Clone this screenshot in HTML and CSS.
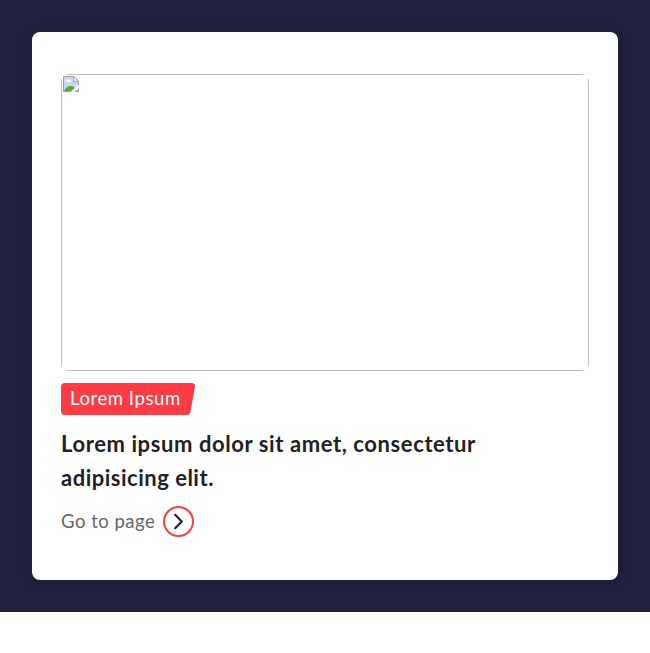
FILE: index.html
```
<!DOCTYPE html>
<html lang="en">
<head>
<meta charset="utf-8">
<title>Card</title>
<link rel="stylesheet" href="styles.css">
</head>
<body>
<section class="stage">
  <article class="card">
    <div class="media">
      <div class="frame">
        <svg class="broken" width="16" height="16" viewBox="0 0 16 16">
          <path d="M.5.5h10.2l4.8 4.8v10.2H.5z" fill="#c6d6f5"/>
          <path d="M2.500 6c0-1.300 1-1.700 1.800-1.500C4.700 2.800 6.900 2.800 7.300 4.500c1.100 0 1.500.7 1.500 1.500z" fill="#fff"/>
          <path d="M1 15c1.500-3.300 4-5 7-5 2.500 0 5 2 7 5z" fill="#58a83a"/>
          <path d="M.5.5h10.200l4.800 4.800v10.200H.5z" fill="none" stroke="#a0a0a0"/>
          <path d="M10.700.5v4.800h4.800z" fill="#fff" stroke="#a0a0a0"/>
          <path d="M7 16.500L16.500 7.800v3.500l-5.500 5.200z" fill="#fff"/>
        </svg>
      </div>
    </div>
    <div class="tag">
      <svg class="tag-shape" width="135" height="32" viewBox="0 0 135 32"><path d="M4 0h126.500q4 0 3.400 4l-4.300 24.500q-.6 3.500-4 3.500H4q-4 0-4-4V4q0-4 4-4z" fill="#ff3c46"/></svg>
      <span class="tag-text">Lorem Ipsum</span>
    </div>
    <h2 class="title"><span class="line-a">Lorem ipsum dolor sit amet, consectetur</span><br><span class="line-b">adipisicing elit.</span></h2>
    <a class="link"><span class="link-text">Go to page</span>
      <svg width="32" height="32" viewBox="0 0 32 32" fill="none"><circle cx="15.500" cy="15.500" r="14.500" stroke="#ff3c46" stroke-width="2"/><path d="M12.200 8.800l6.600 6.700-6.600 6.700" stroke="#222" stroke-width="2.200" stroke-linecap="round" stroke-linejoin="round"/></svg>
    </a>
  </article>
</section>
</body>
</html>
```
FILE: styles.css
```
* { box-sizing: border-box; }
body { margin: 0; background: #fff; font-family: Lato, "Open Sans", sans-serif; }
.stage { height: 612px; padding: 32px; background: #20213d; overflow: hidden; }
.card { height: 548px; padding: 42px 29px 0; border-radius: 8px; background: #fff; box-shadow: 0 0 16px rgba(0, 0, 0, .2); }
.media { height: 297px; border-radius: 8px; overflow: hidden; }
.frame { height: 100%; padding: 1px; border: 1px solid #c0c0c0; }
.broken { display: block; }
.tag { position: relative; width: 135px; height: 32px; margin-top: 12px; padding-left: 9px; }
.tag-shape { position: absolute; left: 0; top: 0; }
.tag-text { position: relative; color: #fff; font-size: 18.500px; line-height: 30px; letter-spacing: .58px; white-space: nowrap; }
.title { margin: 12px 0 0; color: #222; font-size: 22px; font-weight: 700; line-height: 34px; white-space: nowrap; }
.line-a { letter-spacing: .59px; }
.line-b { letter-spacing: .5px; }
.link { display: flex; gap: 8px; margin-top: 11px; color: #666; font-size: 18.500px; line-height: 31px; }
.link-text { width: 94px; letter-spacing: .5px; white-space: nowrap; }
```
